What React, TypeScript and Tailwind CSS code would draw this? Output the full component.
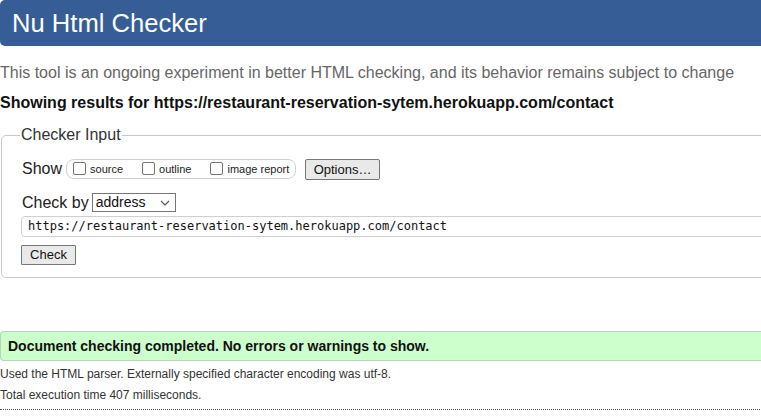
import React from 'react'

const url = 'https://restaurant-reservation-sytem.herokuapp.com/contact'

function Box({ label, last }: { label: string; last?: boolean }) {
    return (
        <label className={last ? 'flex items-center' : 'flex items-center mr-[19px]'}>
            <span className="inline-block w-[13px] h-[13px] border border-[#767676] bg-white rounded-[2px] mr-[4px] mb-[1px]" />
            <span className="text-[11px] text-[#222]">{label}</span>
        </label>
    )
}

export default function App() {
    return (
        <div className="w-[761px] h-[416px] overflow-hidden bg-white font-['Liberation_Sans',Arial,sans-serif] text-[#111]">
            <div className="w-[800px]">
                {/* Header */}
                <h1 className="h-[46px] bg-[#365d95] rounded-l-[5px] text-white text-[25.6px] leading-[46px] pl-[12px]">
                    Nu Html Checker
                </h1>

                <p className="mt-[17px] text-[16px] leading-[20px] text-[#666]">
                    This tool is an ongoing experiment in better HTML checking, and its behavior remains subject to change
                </p>
                <p className="mt-[10px] text-[16px] leading-[20px] font-bold text-[#111]">
                    Showing results for {url}
                </p>

                {/* Checker input */}
                <fieldset className="mt-[13px] ml-[1px] border border-[#c8c8c8] rounded-[5px] px-[20px] pt-[6px] pb-[13px] h-[152px]">
                    <legend className="text-[16px] leading-[18px] text-[#333] px-[1px] ml-[-2px]">Checker Input</legend>
                    <div className="flex items-center h-[22px] mt-[8px]">
                        <span className="text-[16px] text-[#222] mr-[4px]">Show</span>
                        <div className="flex items-center h-[20px] border border-[#d0d0d0] rounded-[8px] pl-[6px] w-[230px]">
                            <Box label="source" />
                            <Box label="outline" />
                            <Box label="image report" last />
                        </div>
                        <button className="ml-[9px] h-[21px] w-[75px] border border-[#767676] bg-[#e9e9e9] rounded-[2px] text-[13px] text-[#111] leading-[19px]">
                            Options…
                        </button>
                    </div>

                    <div className="flex items-center mt-[13px] h-[19px]">
                        <span className="text-[16px] text-[#222] mr-[3px]">Check by</span>
                        <div className="flex items-center justify-between h-[19px] w-[84px] border border-[#767676] bg-white px-[3px]">
                            <span className="text-[14px] text-[#111] leading-[17px]">address</span>
                            <svg width="10" height="6" viewBox="0 0 10 6" className="mr-[2px]">
                                <path d="M1 1l4 4 4-4" stroke="#555" strokeWidth="1.2" fill="none" />
                            </svg>
                        </div>
                    </div>

                    <div className="mt-[4px] ml-[-1px] h-[21px] border border-[#d0d0d0] rounded-[4px] pl-[6px] flex items-center">
                        <span className="font-['DejaVu_Sans_Mono','Liberation_Mono',monospace] text-[12px] text-[#111] leading-[19px]">{url}</span>
                    </div>

                    <button className="mt-[8px] ml-[-1px] h-[20px] w-[55px] border border-[#767676] bg-[#e9e9e9] rounded-[1px] text-[13px] text-[#111] leading-[18px] block">
                        Check
                    </button>
                </fieldset>

                {/* Result */}
                <div className="mt-[53px] h-[30px] bg-[#ccffcc] border border-[#b9d4b9] border-r-0 rounded-l-[4px] pl-[7px] flex items-center">
                    <span className="text-[14px] font-bold text-[#111]">Document checking completed. No errors or warnings to show.</span>
                </div>

                <p className="mt-[6px] text-[12px] leading-[14px] text-[#333]">
                    Used the HTML parser. Externally specified character encoding was utf-8.
                </p>
                <p className="mt-[7px] text-[12px] leading-[14px] text-[#333]">
                    Total execution time 407 milliseconds.
                </p>
                <div className="mt-[7px] border-t border-dotted border-[#555]" />
            </div>
        </div>
    )
}
